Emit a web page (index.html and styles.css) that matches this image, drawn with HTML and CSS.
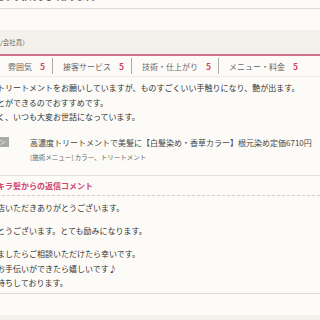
FILE: index.html
```html
<!DOCTYPE html>
<html lang="ja">
<head>
    <meta charset="UTF-8">
    <meta name="viewport" content="width=device-width, initial-scale=1.0">
    <link rel="stylesheet" href="styles.css">
    <title>口コミ一覧</title>
</head>
<body>
    <div class="reviews">
        <!-- previous review (only the end of its reply is visible) -->
        <div class="review prev">
            <div class="reply-body">
                <p>心よりお待ちしております。</p>
            </div>
        </div>

        <div class="review">
            <div class="review-head">
                <span class="reviewer">（30代/会社員）</span>
            </div>
            <ul class="ratings">
                <li><span class="label">雰囲気</span><span class="score">5</span></li>
                <li><span class="label">接客サービス</span><span class="score">5</span></li>
                <li><span class="label">技術・仕上がり</span><span class="score">5</span></li>
                <li><span class="label">メニュー・料金</span><span class="score">5</span></li>
            </ul>
            <div class="review-body">
                トリートメントをお願いしていますが、ものすごくいい手触りになり、艶が出ます。<br>
                とができるのでおすすめです。<br>
                く、いつも大変お世話になっています。
            </div>
            <div class="menu">
                <div class="menu-badge">クーポン</div>
                <div class="menu-info">
                    <div class="menu-title">高濃度トリートメントで美髪に【白髪染め・香草カラー】根元染め定価6710円</div>
                    <div class="menu-sub">[施術メニュー] カラー、トリートメント</div>
                </div>
            </div>
            <div class="reply">
                <div class="reply-title">キラ髪からの返信コメント</div>
                <div class="reply-body">
                    <p>店いただきありがとうございます。</p>
                    <p>とうございます。とても励みになります。</p>
                    <p>ましたらご相談いただけたら幸いです。<br>
                    お手伝いができたら嬉しいです♪<br>
                    待ちしております。</p>
                </div>
            </div>
        </div>

        <div class="review">
            <div class="review-head">
                <span class="reviewer">（20代/学生）</span>
            </div>
        </div>
    </div>
</body>
</html>
```

FILE: styles.css
```css
body {
    margin: 0;
    background-color: #fcfbf8;
    font-family: "Noto Sans CJK JP", "Noto Sans", sans-serif;
    color: #333;
    overflow: hidden;
}

.reviews {
    margin-left: -3px;
    white-space: nowrap;
}

.review {
    border-bottom: 1px solid #dedbd6;
    margin-bottom: 21px;
}
.review.prev {
    margin-top: -10.5px;
}
.review.prev .reply-body {
    padding: 0 0 4px;
}

/* reviewer line */
.review-head {
    height: 24px;
    line-height: 24px;
    background-color: #f4f1ec;
    border-bottom: 2px solid #d4708b;
    font-size: 6.5px;
    color: #666;
}
.reviewer {
    margin-left: -17px;
}

/* rating row */
.ratings {
    display: flex;
    align-items: center;
    height: 20px;
    margin: 0;
    padding: 0 0 0 11px;
    list-style: none;
    border-bottom: 1px solid #eeebe6;
}
.ratings li {
    display: flex;
    align-items: center;
    height: 16px;
    padding-right: 7px;
    margin-right: 10px;
    border-right: 1px solid #aaa;
}
.ratings li:last-child {
    border-right: none;
}
.label {
    font-size: 8px;
    color: #666;
}
.score {
    margin-left: 8px;
    font-size: 8.5px;
    font-weight: bold;
    color: #d0456f;
}

.review-body {
    padding-top: 4px;
    font-size: 8px;
    line-height: 14.5px;
}

/* menu used */
.menu {
    display: flex;
    align-items: flex-start;
    margin-top: 12.5px;
}
.menu-badge {
    width: 31px;
    height: 10px;
    margin-left: -19px;
    background-color: #a9a9a9;
    color: #fff;
    font-size: 6px;
    line-height: 10px;
    text-align: center;
}
.menu-info {
    margin-left: 21px;
}
.menu-title {
    font-size: 8px;
    line-height: 12px;
    color: #444;
}
.menu-sub {
    margin-top: 3px;
    font-size: 6.5px;
    line-height: 10px;
    color: #666;
}

/* salon reply */
.reply {
    margin-top: 13px;
    border-top: 1px solid #e2dfda;
}
.reply-title {
    line-height: 19px;
    font-size: 8px;
    font-weight: bold;
    color: #d0456f;
    border-bottom: 1px dashed #cfcfcf;
}
.reply-body {
    padding: 5px 0 2.5px;
    font-size: 8px;
    line-height: 14.5px;
}
.reply-body p {
    margin: 0 0 8.5px;
}
.reply-body p:last-child {
    margin-bottom: 0;
}
```
